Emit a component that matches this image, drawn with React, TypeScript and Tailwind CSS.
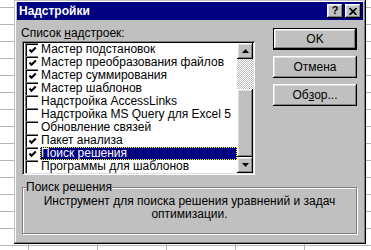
import React from 'react';

const items = [
  { name: 'Мастер подстановок', checked: true },
  { name: 'Мастер преобразования файлов', checked: true },
  { name: 'Мастер суммирования', checked: true },
  { name: 'Мастер шаблонов', checked: true },
  { name: 'Надстройка AccessLinks', checked: false },
  { name: 'Надстройка MS Query для Excel 5', checked: false },
  { name: 'Обновление связей', checked: false },
  { name: 'Пакет анализа', checked: true },
  { name: 'Поиск решения', checked: true, selected: true },
  { name: 'Программы для шаблонов', checked: false },
];

const raised =
  'bg-[#c0c0c0] shadow-[inset_-1px_-1px_#000,inset_1px_1px_#fff,inset_-2px_-2px_#808080,inset_2px_2px_#dfdfdf]';

const Check = ({ checked }: { checked: boolean }) => (
  <div className="w-[13px] h-[13px] shrink-0 bg-white shadow-[inset_1px_1px_#808080,inset_2px_2px_#000] flex items-center justify-center">
    {checked && (
      <svg width="9" height="9" viewBox="0 0 9 9" className="ml-[1px] mt-[1px]">
        <path d="M1.5 3.5 L3.5 5.8 L7.8 1.5" stroke="#000" strokeWidth="2" fill="none" />
      </svg>
    )}
  </div>
);

const Arrow = ({ down }: { down?: boolean }) => (
  <svg width="7" height="4" viewBox="0 0 7 4">
    <path d={down ? 'M0 0 H7 L3.5 4 Z' : 'M0 4 H7 L3.5 0 Z'} fill="#000" />
  </svg>
);

export default function App() {
  return (
    <div className="w-[371px] h-[250px] overflow-hidden bg-white bg-[linear-gradient(#b4b4b4_1px,transparent_1px),linear-gradient(90deg,#b4b4b4_1px,transparent_1px)] bg-size-[69px_17px] bg-position-[28px_7px] font-['Liberation_Sans',Arial,sans-serif] text-[12px] text-black">
      <div className="ml-[14px] w-[352px] h-[244px] bg-[#c0c0c0] p-[3px] flex flex-col shadow-[inset_-1px_-1px_#000,inset_1px_1px_#c0c0c0,inset_-2px_-2px_#808080,inset_2px_2px_#fff]">
        {/* Title bar */}
        <div className="h-[18px] -mt-[1px] bg-[#000080] flex items-center justify-between pl-[2px] pr-[2px]">
          <span className="text-white font-bold text-[12px] leading-none">Надстройки</span>
          <div className="flex">
            <div className={`w-[16px] h-[14px] ${raised} flex items-center justify-center text-[11px] font-bold leading-none pb-[1px]`}>?</div>
            <div className={`ml-[2px] w-[16px] h-[14px] ${raised} flex items-center justify-center`}>
              <svg width="8" height="7" viewBox="0 0 8 7">
                <path d="M0.5 0 L7.5 7 M7.5 0 L0.5 7" stroke="#000" strokeWidth="1.6" />
              </svg>
            </div>
          </div>
        </div>

        <div className="flex-1 pl-[5px] pr-[6px] flex flex-col">
          <div className="flex mt-[7px]">
            {/* List */}
            <div className="w-[233px]">
              <div className="h-[13px] leading-[13px] -ml-[1px]">
                Список <span className="underline">н</span>адстроек:
              </div>
              <div className="mt-[1px] w-[233px] h-[134px] bg-white p-[2px] flex shadow-[inset_1px_1px_#808080,inset_-1px_-1px_#fff,inset_2px_2px_#000,inset_-2px_-2px_#dfdfdf]">
                <div className="flex-1 flex flex-col">
                  {items.map((it) => (
                    <div key={it.name} className="h-[13px] flex items-center pl-[1px]">
                      <Check checked={it.checked} />
                      <div
                        className={`ml-[2px] flex-1 h-[13px] leading-[13px] pl-[1px] whitespace-nowrap overflow-hidden ${
                          it.selected ? 'bg-[#000080] text-white outline outline-dotted outline-[#ffff00] -outline-offset-1' : ''
                        }`}
                      >
                        {it.name}
                      </div>
                    </div>
                  ))}
                </div>
                {/* Scrollbar */}
                <div className="w-[16px] flex flex-col">
                  <div className={`h-[16px] ${raised} flex items-center justify-center`}>
                    <Arrow />
                  </div>
                  <div className="flex-1 flex flex-col bg-[repeating-conic-gradient(#c0c0c0_0%_25%,#fff_0%_50%)] bg-size-[2px_2px]">
                    <div className="flex-1" />
                    <div className={`h-[68px] ${raised}`} />
                  </div>
                  <div className={`h-[16px] ${raised} flex items-center justify-center`}>
                    <Arrow down />
                  </div>
                </div>
              </div>
            </div>

            {/* Buttons */}
            <div className="ml-auto w-[84px] mt-[1px] flex flex-col gap-[6px]">
              <div className="h-[22px] flex items-center justify-center bg-[#c0c0c0] shadow-[inset_0_0_0_1px_#000,inset_-2px_-2px_#000,inset_2px_2px_#fff,inset_-3px_-3px_#808080,inset_3px_3px_#dfdfdf]">
                OK
              </div>
              <div className={`h-[22px] flex items-center justify-center ${raised}`}>Отмена</div>
              <div className={`h-[22px] flex items-center justify-center ${raised}`}>
                Об<span className="underline">з</span>ор...
              </div>
            </div>
          </div>

          {/* Group */}
          <fieldset className="mt-[6px] h-[53px] border border-[#808080] shadow-[1px_1px_0_#fff,inset_1px_1px_0_#fff] pl-[2px] pr-[2px]">
            <legend className="ml-[1px] px-0 leading-[12px] bg-[#c0c0c0]">Поиск решения</legend>
            <div className="text-center leading-[13px] mt-[2px]">
              Инструмент для поиска решения уравнений и задач
              <br />
              оптимизации.
            </div>
          </fieldset>
        </div>
      </div>
    </div>
  );
}
